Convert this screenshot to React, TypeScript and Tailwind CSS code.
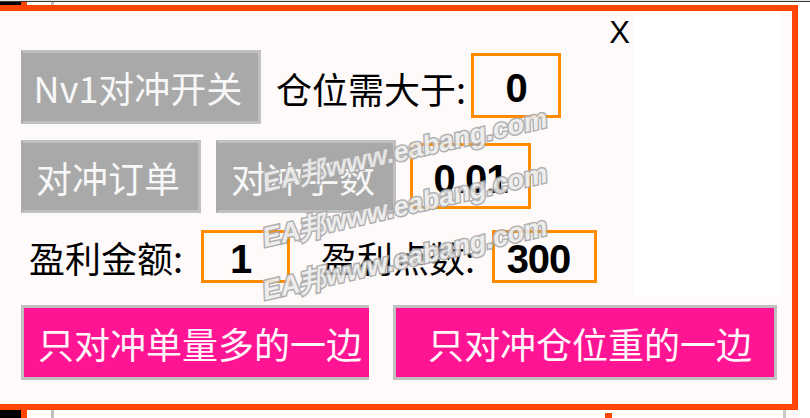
import React from "react";

const cjk = "font-['Noto_Sans_CJK_SC','Liberation_Sans',sans-serif]";
const num = "font-['Liberation_Sans','Arial',sans-serif]";

function GrayBtn({ w, label }: { w: string; label: string }) {
  return (
    <div
      className={`${w} h-full shrink-0 border-[3px] border-[#c0c0c0] border-l-[#aaaaaa] bg-[#a9a9a9] flex items-center justify-center pr-[6px] ${cjk} text-[36px] leading-none text-[#f7f7f7]`}
    >
      {label}
    </div>
  );
}

function Box({ cls, value }: { cls: string; value: string }) {
  return (
    <div
      className={`${cls} shrink-0 border-[3px] border-[#ff8c00] flex items-center justify-center pt-[5px] ${num} font-bold text-[40px] leading-none text-black tracking-[-1px]`}
    >
      {value}
    </div>
  );
}

function Segments() {
  return (
    <>
      <div className="w-[21px] bg-black" />
      <div className="w-[6px] bg-[#ff4500]" />
      <div className="w-[24px] bg-white" />
      <div className="w-[3px] bg-[#c0c0c0]" />
    </>
  );
}

export default function App() {
  const wm = "EA邦www.eabang.com";
  return (
    <div className="relative w-[810px] h-[418px] bg-white overflow-hidden">
      <div className="h-px bg-[#e6e6e6]" />
      <div className="h-px bg-[#3a3a3a]" />
      <div className="flex h-[3px]">
        <Segments />
        <div className="flex-1 bg-white" />
      </div>

      <div className="w-[798px] h-[405px] border-t-[6px] border-r-[6px] border-b-[6px] border-[#ff4500] bg-[#fffafa] flex flex-col">
        <div className="flex h-[285px]">
          <div className="w-[633px] flex flex-col pl-[21px]">
            <div className="h-[39px] flex justify-end items-start pr-[3px]">
              <span className={`mt-[6px] ${num} text-[31px] leading-none text-black`}>X</span>
            </div>

            <div className="flex items-start h-[74px]">
              <GrayBtn w="w-[240px]" label="Nv1对冲开关" />
              <div className={`ml-[15px] w-[195px] mt-[20px] ${cjk} text-[36px] leading-none text-black`}>
                仓位需大于:
              </div>
              <Box cls="w-[90px] h-[65px] mt-[3px]" value="0" />
            </div>

            <div className="flex items-start h-[73px] mt-[16px]">
              <GrayBtn w="w-[180px]" label="对冲订单" />
              <div className="w-[15px] shrink-0" />
              <GrayBtn w="w-[180px]" label="对冲手数" />
              <Box cls="ml-[14px] w-[121px] h-[66px] mt-[3px]" value="0.01" />
            </div>

            <div className="flex items-center h-[53px] mt-[17px]">
              <div className={`w-[180px] pl-[8px] ${cjk} text-[36px] leading-none text-black`}>盈利金额:</div>
              <Box cls="w-[89px] h-[53px] pr-[10px]" value="1" />
              <div className={`w-[202px] pl-[31px] ${cjk} text-[36px] leading-none text-black`}>盈利点数:</div>
              <Box cls="w-[105px] h-[53px] pr-[12px]" value="300" />
            </div>
          </div>
          <div className="w-[147px] h-[285px] bg-white" />
        </div>

        <div className="flex pl-[21px] pt-[9px] gap-[24px]">
          <div
            className={`w-[348px] h-[75px] border-[3px] border-[#c0c0c0] border-r-0 bg-[#ff1493] flex items-center justify-center pl-[7px] ${cjk} text-[36px] leading-none text-[#fff5fa]`}
          >
            只对冲单量多的一边
          </div>
          <div
            className={`w-[384px] h-[75px] border-[3px] border-[#c0c0c0] bg-[#ff1493] flex items-center justify-center pl-[10px] ${cjk} text-[36px] leading-none text-[#fff5fa]`}
          >
            只对冲仓位重的一边
          </div>
        </div>
      </div>

      <div className="flex h-[8px]">
        <Segments />
        <div className="w-[551px] bg-white" />
        <div className="w-[7px] h-[5px] mt-[3px] bg-[#ff4500]" />
        <div className="w-[171px] bg-white" />
        <div className="w-[3px] bg-[#c8c8c8]" />
        <div className="w-[12px] bg-[#fffafa]" />
      </div>

      {[151, 206, 259].map((t) => (
        <div
          key={t}
          className={`absolute left-[405px] whitespace-nowrap -translate-x-1/2 -translate-y-1/2 -rotate-[13deg] ${num} font-bold italic text-[27px] leading-none text-[#ececec] [-webkit-text-stroke:3px_#a8a8a8] [paint-order:stroke_fill] opacity-90 pointer-events-none`}
          style={{ top: t }}
        >
          {wm}
        </div>
      ))}
    </div>
  );
}
